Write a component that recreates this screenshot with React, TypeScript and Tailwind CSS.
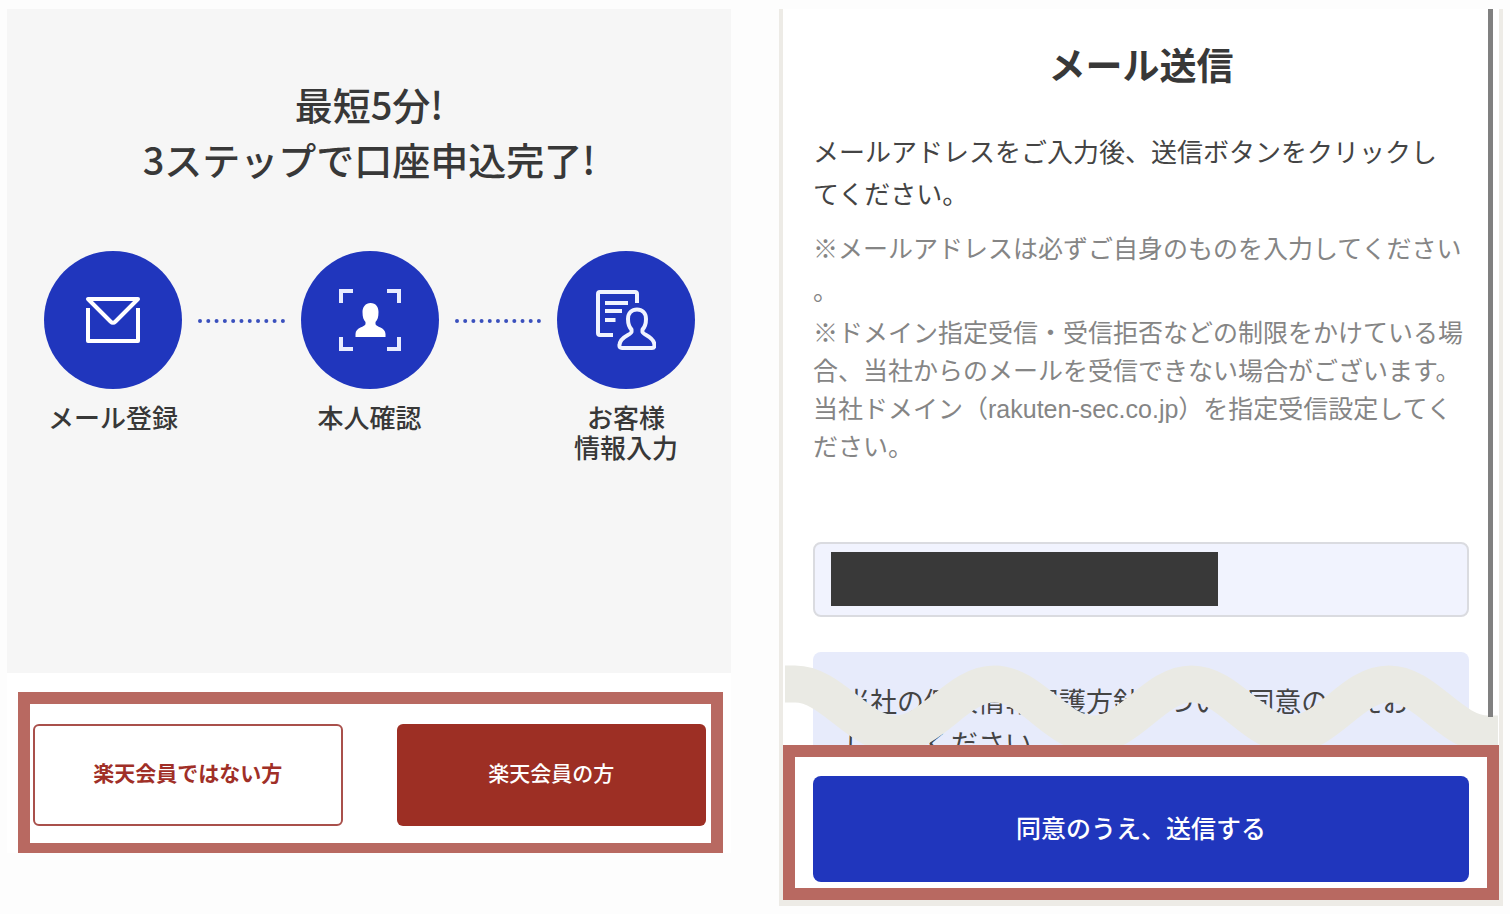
import type { ReactNode } from "react";

function MailIcon() {
  return (
    <svg width="56" height="48" viewBox="0 0 56 48" fill="none" stroke="#fff" strokeWidth="4" strokeLinejoin="round" aria-hidden="true">
      <path d="M3 3H53L30.500 25.500Q28 28 25.500 25.500Z" />
      <path d="M3 12V45H53V12" />
    </svg>
  );
}

function IdentityIcon() {
  return (
    <svg width="62" height="62" viewBox="0 0 62 62" fill="none" aria-hidden="true">
      <path d="M2 14V2H14M48 2H60V14M60 48V60H48M14 60H2V48" stroke="#e8ecff" strokeWidth="4" />
      <path
        d="M31.500 14C37 14 39.500 18 39.500 23C39.500 28 38.500 31 36.500 33V35C36.500 38 46.500 38 46.500 45V48H16.500V45C16.500 38 26.500 38 26.500 35V33C24.500 31 23.500 28 23.500 23C23.500 18 26.500 14 31.500 14Z"
        fill="#fff"
      />
    </svg>
  );
}

function CustomerIcon() {
  return (
    <svg width="60" height="60" viewBox="0 0 60 60" fill="none" stroke="#f0f3ff" strokeWidth="4" strokeLinejoin="round" aria-hidden="true">
      <path d="M41 13V4Q41 2 39 2H4Q2 2 2 4V43Q2 45 4 45H17" />
      <path d="M9 13H32M9 21H26M9 30H19.500" />
      <path d="M41 19.500C46 19.500 50 23 50 29C50 34 49 37 46.500 39.500V42C47 45 58 46 58.500 55Q58.500 58 56 58H26Q23 58 23.500 55C24 46 35 45 35.500 42V39.500C33 37 32 34 32 29C32 23 36 19.500 41 19.500Z" />
    </svg>
  );
}

function Step({ icon, children }: { icon: ReactNode; children: ReactNode }) {
  return (
    <li className="w-[138px] shrink-0 flex flex-col items-center">
      <div className="size-[138px] rounded-full bg-[#2036bd] flex items-center justify-center">
        {icon}
      </div>
      <p className="mt-[15px] text-[26px] leading-[30px] font-medium text-center whitespace-nowrap">
        {children}
      </p>
    </li>
  );
}

function Dots() {
  return (
    <li aria-hidden="true" className="flex-1 mx-4 mt-[68px] border-t-4 border-dotted border-[#3a50bd]" />
  );
}

function Wave() {
  return (
    <svg
      className="absolute left-0 bottom-0 w-full h-[93px]"
      viewBox="0 0 715 93"
      preserveAspectRatio="none"
      fill="none"
      aria-hidden="true"
    >
      <path
        d="M2 32H12C49 32 75 82 112 82C149 82 174 32 211 32C248 32 273 82 310 82C347 82 371 32 408 32C445 32 470 82 507 82C544 82 568 32 605 32C642 32 667 82 704 82H714"
        stroke="#eaeae4"
        strokeWidth="37"
      />
    </svg>
  );
}

function StepsPanel() {
  return (
    <section className="bg-white text-[#383838]">
      <div className="bg-[#f6f6f6] pt-[67px] pb-[209px]">
        <h1 className="text-[38px] leading-[55px] font-medium text-center font-['Noto_Sans_CJK_JP',sans-serif]">
          最短5分!
          <br />
          3ステップで口座申込完了!
        </h1>
        <ol className="mt-[65px] pl-[37px] pr-9 flex items-start">
          <Step icon={<MailIcon />}>メール登録</Step>
          <Dots />
          <Step icon={<IdentityIcon />}>本人確認</Step>
          <Dots />
          <Step icon={<CustomerIcon />}>
            お客様
            <br />
            情報入力
          </Step>
        </ol>
      </div>
      <div className="pt-[19px] pl-[11px] pr-2">
        <div className="border-12 border-b-10 border-[#b86961] pt-5 pb-[17px] pl-[3px] pr-[5px] grid grid-cols-2 gap-[54px]">
          <button type="button" className="h-[102px] rounded-md border-2 border-[#a9504b] bg-white pb-0.5 text-[21px] font-bold text-[#a02f27]">
            楽天会員ではない方
          </button>
          <button type="button" className="h-[102px] rounded-md bg-[#9d2f24] pb-0.5 text-[21px] font-medium text-white">
            楽天会員の方
          </button>
        </div>
      </div>
    </section>
  );
}

function MailPanel() {
  return (
    <section className="relative bg-white border-x-4 border-b-6 border-[#edebe6] text-[#444]">
      <div className="relative">
        <div className="px-[30px] pt-8">
          <h2 className="text-[37px] leading-[54px] font-bold text-center text-[#383838]">
            メール送信
          </h2>
          <p className="mt-[37px] text-[26px] leading-[42px] whitespace-nowrap">
            メールアドレスをご入力後、送信ボタンをクリックし
            <br />
            てください。
          </p>
          <p className="mt-3 text-[25px] leading-[42px] whitespace-nowrap text-[#858585]">
            ※メールアドレスは必ずご自身のものを入力してください
            <br />。
          </p>
          <p className="mt-0.5 text-[25px] leading-[38px] whitespace-nowrap text-[#858585]">
            ※ドメイン指定受信・受信拒否などの制限をかけている場
            <br />
            合、当社からのメールを受信できない場合がございます。
            <br />
            当社ドメイン（rakuten-sec.co.jp）を指定受信設定してく
            <br />
            ださい。
          </p>
          <div className="relative mt-[76px]">
            <input
              type="email"
              aria-label="メールアドレス"
              className="block w-full h-[75px] rounded-lg border-2 border-[#dadbe0] bg-[#f1f3fe] px-4 text-[26px]"
            />
            {/* masked address */}
            <div className="absolute left-[18px] top-2.5 w-[387px] h-[54px] bg-[#393939]" />
          </div>
          <div className="mt-[35px] h-[93px] overflow-hidden rounded-t-lg bg-[#e7ebfb] pt-[30px] pl-[30px]">
            <p className="text-[27px] leading-[42px] whitespace-nowrap">
              当社の個人情報保護方針について同意のうえお申
              <br />
              し込みください。
            </p>
          </div>
        </div>
        <Wave />
        <div className="absolute right-1.5 top-0 bottom-7 w-[5px] bg-[#808080]" />
      </div>
      <div className="relative border-12 border-[#b86961] bg-white px-[18px] pt-[19px] pb-1.5">
        <button type="button" className="block w-full h-[106px] rounded-lg bg-[#2036bd] pt-0.5 text-[25px] font-medium text-white">
          同意のうえ、送信する
        </button>
      </div>
    </section>
  );
}

export default function App() {
  return (
    <main
      lang="ja"
      className="min-h-screen bg-[#fdfdfd] px-[7px] pt-[9px] pb-2 grid grid-cols-2 items-start gap-12 font-['Liberation_Sans','Noto_Sans_CJK_JP',sans-serif]"
    >
      <StepsPanel />
      <MailPanel />
    </main>
  );
}
